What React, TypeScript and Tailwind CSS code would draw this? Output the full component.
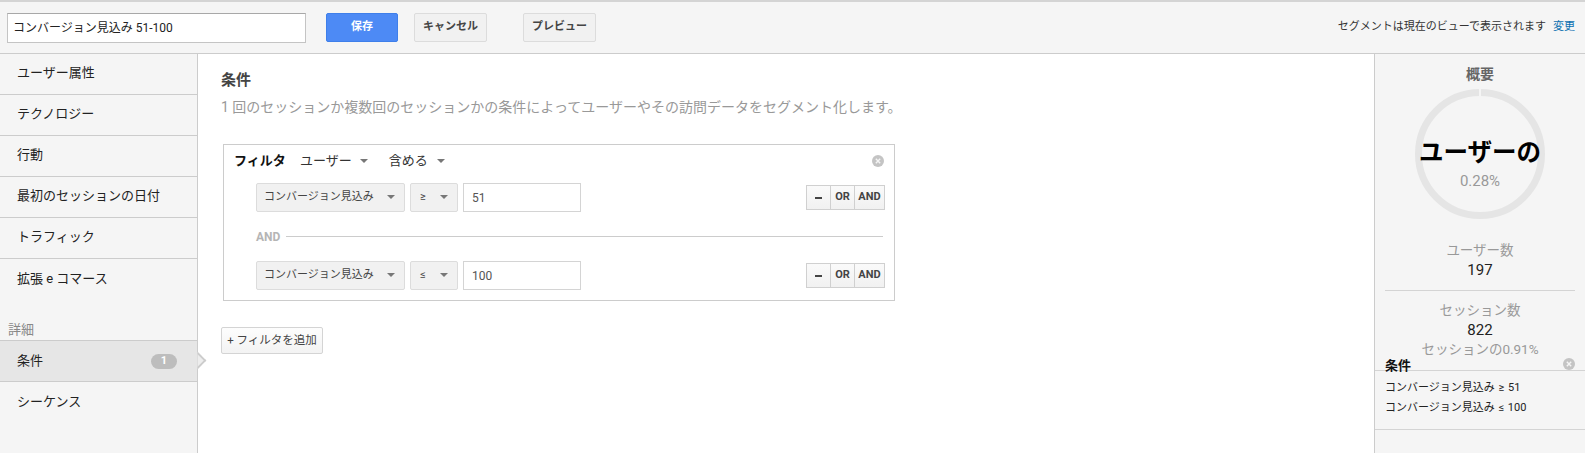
const font = { fontFamily: '"Roboto", "Noto Sans CJK JP", sans-serif' };

function Caret() {
  return <span className="block w-0 h-0 border-x-[4px] border-x-transparent border-t-[4px] border-t-[#777] shrink-0" />;
}

function CloseIcon() {
  return (
    <svg width="12" height="12" viewBox="0 0 12 12">
      <circle cx="6" cy="6" r="6" fill="#c4c4c4" />
      <path d="M3.8 3.8l4.4 4.4M8.2 3.8l-4.4 4.4" stroke="#f5f5f5" strokeWidth="1.4" />
    </svg>
  );
}

function ConditionRow({ op, value }: { op: string; value: string }) {
  return (
    <div className="flex items-center">
      <div className="w-[149px] h-[29px] flex items-center justify-between pl-[7px] pr-[9px] pb-[1px] border border-[#dcdcdc] rounded-[2px] bg-[#f1f1f1] text-[11px] text-[#444]">
        <span>コンバージョン見込み</span>
        <Caret />
      </div>
      <div className="w-[48px] h-[29px] ml-[5px] flex items-center justify-between px-[9px] pb-[1px] border border-[#dcdcdc] rounded-[2px] bg-[#f1f1f1] text-[11px] text-[#444]">
        <span>{op}</span>
        <Caret />
      </div>
      <div className="w-[118px] h-[29px] ml-[5px] flex items-center pl-[8px] border border-[#d4d4d4] bg-white text-[12px] text-[#555]">
        {value}
      </div>
      <div className="ml-auto mr-[9px] flex h-[25px] border border-[#d0d0d0] text-[11px] font-bold text-[#444] bg-gradient-to-b from-[#fafafa] to-[#f1f1f1]">
        <span className="w-[24px] flex items-center justify-center border-r border-[#d0d0d0]">
          <span className="w-[7px] h-[2px] bg-[#444]" />
        </span>
        <span className="w-[24px] flex items-center justify-center border-r border-[#d0d0d0]">OR</span>
        <span className="w-[29px] flex items-center justify-center">AND</span>
      </div>
    </div>
  );
}

function SideItem({ label, last }: { label: string; last?: boolean }) {
  return (
    <div className={`h-[41px] pl-[17px] pb-[2px] flex items-center text-[13px] text-[#222] ${last ? '' : 'border-b border-[#ccc]'}`}>{label}</div>
  );
}

function Stat({ label, value }: { label: string; value: string }) {
  return (
    <div className="flex flex-col items-center">
      <div className="h-[20px] leading-[20px] text-[13.5px] text-[#999]">{label}</div>
      <div className="h-[20px] leading-[20px] text-[15px] text-[#222]">{value}</div>
    </div>
  );
}

export default function App() {
  return (
    <div className="w-[1585px] h-[453px] overflow-hidden bg-white flex flex-col" style={font}>
      <div className="h-[54px] shrink-0 bg-[#f5f5f5] border-t-2 border-t-[#d4d4d4] border-b border-b-[#ccc] flex items-center pl-[7px] pr-[10px]">
        <div className="w-[299px] h-[30px] flex items-center pl-[5px] bg-white border border-[#c4c4c4] border-t-[#a8a8a8] text-[12px] text-[#222]">
          コンバージョン見込み 51-100
        </div>
        <div className="ml-[20px] w-[72px] h-[29px] flex items-center justify-center rounded-[2px] bg-[#4d8af5] border border-[#3f7fea] text-[11px] font-bold text-white">保存</div>
        <div className="ml-[16px] w-[73px] h-[29px] flex items-center justify-center rounded-[2px] bg-[#f1f1f1] border border-[#dcdcdc] text-[11px] font-bold text-[#444]">キャンセル</div>
        <div className="ml-[36px] w-[73px] h-[29px] flex items-center justify-center rounded-[2px] bg-[#f1f1f1] border border-[#dcdcdc] text-[11px] font-bold text-[#444]">プレビュー</div>
        <div className="ml-auto text-[11px] text-[#333]">セグメントは現在のビューで表示されます</div>
        <div className="ml-[7px] text-[11px] text-[#0b6fb0]">変更</div>
      </div>

      <div className="flex-1 flex min-h-0">
        <div className="w-[198px] shrink-0 bg-[#f5f5f5] border-r border-[#ccc]">
          <SideItem label="ユーザー属性" />
          <SideItem label="テクノロジー" />
          <SideItem label="行動" />
          <SideItem label="最初のセッションの日付" />
          <SideItem label="トラフィック" />
          <SideItem label="拡張 e コマース" last />
          <div className="mt-[21px] h-[20px] pl-[8px] text-[13px] leading-[18px] text-[#888] border-b border-[#ccc]">詳細</div>
          <div className="relative h-[41px] pl-[17px] pr-[20px] flex items-center justify-between bg-[#e6e6e6] border-b border-[#ccc] text-[13px] text-[#222]">
            <span>条件</span>
            <span className="w-[26px] h-[15px] rounded-full bg-[#bdbdbd] text-white text-[11px] font-bold flex items-center justify-center">1</span>
            <span className="absolute right-[-7px] top-[13px] w-[13px] h-[13px] rotate-45 bg-[#ededed] border-t-2 border-r-2 border-[#ccc] [clip-path:polygon(0_0,100%_0,100%_100%)]" />
          </div>
          <SideItem label="シーケンス" last />
        </div>

        <div className="flex-1 min-w-0 pl-[23px]">
          <h2 className="mt-[16px] h-[20px] leading-[20px] text-[15px] font-bold text-[#444]">条件</h2>
          <p className="mt-[7px] h-[20px] leading-[20px] text-[14px] text-[#999] whitespace-nowrap">
            1 回のセッションか複数回のセッションかの条件によってユーザーやその訪問データをセグメント化します。
          </p>
          <div className="mt-[27px] ml-[2px] w-[672px] h-[157px] border border-[#ccc] pl-[32px] relative">
            <div className="h-[38px] flex items-center -ml-[22px] pb-[6px] text-[13px] text-[#333]">
              <span className="font-bold text-[#111] w-[66px]">フィルタ</span>
              <span>ユーザー</span>
              <span className="ml-[8px]"><Caret /></span>
              <span className="ml-[21px]">含める</span>
              <span className="ml-[9px]"><Caret /></span>
            </div>
            <span className="absolute right-[10px] top-[10px] flex"><CloseIcon /></span>
            <ConditionRow op="≥" value="51" />
            <div className="h-[49px] flex items-center pr-[11px]">
              <span className="text-[12px] font-bold text-[#b5b5b5]">AND</span>
              <span className="ml-[6px] flex-1 h-px bg-[#ccc]" />
            </div>
            <ConditionRow op="≤" value="100" />
          </div>
          <div className="mt-[26px] w-[102px] h-[27px] flex items-center justify-center rounded-[2px] border border-[#d4d4d4] bg-gradient-to-b from-[#fdfdfd] to-[#f3f3f3] text-[11.5px] text-[#444]">
            + フィルタを追加
          </div>
        </div>

        <div className="w-[211px] shrink-0 bg-[#f5f5f5] border-l border-[#ccc] flex flex-col">
          <div className="mt-[10px] h-[20px] leading-[20px] text-center text-[14px] font-bold text-[#666]">概要</div>
          <div className="relative mt-[5px] mx-auto w-[130px] h-[130px]">
            <svg width="130" height="130" viewBox="0 0 130 130" className="block">
              <circle cx="65" cy="65" r="61.5" fill="none" stroke="#e5e5e5" strokeWidth="7" />
              <rect x="64" y="0" width="2" height="9" fill="#f5f5f5" />
            </svg>
            <div className="absolute inset-0 flex flex-col items-center pt-[48px]">
              <div className="h-[32px] leading-[32px] text-[24.5px] font-bold text-black whitespace-nowrap">ユーザーの</div>
              <div className="mt-[2px] text-[15px] leading-[20px] text-[#999]">0.28%</div>
            </div>
          </div>
          <div className="mt-[21px]">
            <Stat label="ユーザー数" value="197" />
          </div>
          <div className="mx-[10px] mt-[10px] mb-[9px] h-px bg-[#d4d4d4]" />
          <Stat label="セッション数" value="822" />
          <div className="h-[18px] leading-[18px] text-center text-[13.5px] text-[#999]">セッションの0.91%</div>
          <div className="relative h-[60px] mt-[12px] border-t border-b border-[#d4d4d4]">
            <div className="absolute left-[10px] top-[-14px] text-[13px] font-bold text-[#111] leading-[18px]">条件</div>
            <span className="absolute right-[10px] top-[-13px] flex"><CloseIcon /></span>
            <div className="pl-[10px] pt-[7px] text-[11px] leading-[20px] text-[#222] [word-spacing:1px]">
              <div>コンバージョン見込み ≥ 51</div>
              <div>コンバージョン見込み ≤ 100</div>
            </div>
          </div>
        </div>
      </div>
    </div>
  );
}
